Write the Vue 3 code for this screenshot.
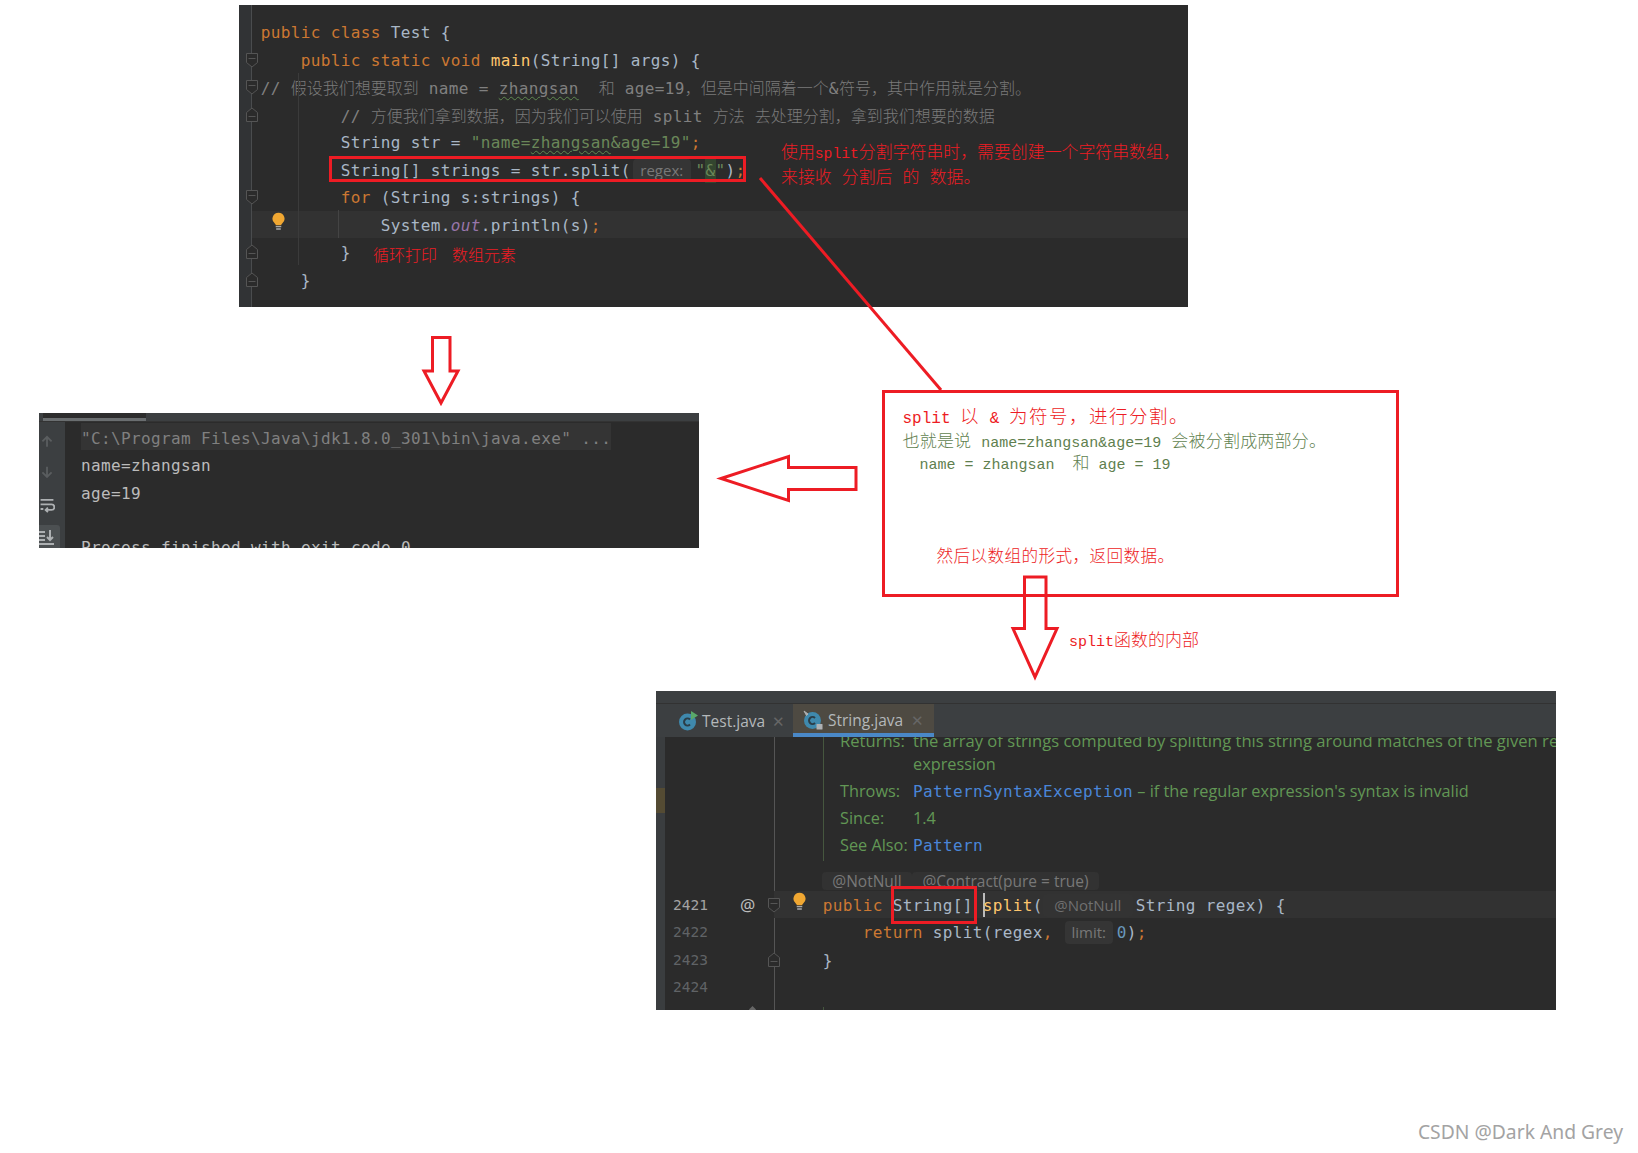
<script setup>
const topFolds = [
  { y: 60, up: false }, { y: 87, up: false }, { y: 115, up: true },
  { y: 197, up: false }, { y: 252, up: true }, { y: 280, up: true }
].map(f => ({ ...f, y: f.y - 5 }))
</script>

<template>
  <div class="canvas">
    <!-- top editor -->
    <section class="panel top-panel">
      <div class="strip"></div>
      <div class="guide g1"></div>
      <div class="guide g2"></div>
      <svg v-for="f in topFolds" :key="f.y" class="fold" :style="{ top: f.y - 8 + 'px' }" viewBox="0 0 12 16">
        <path v-if="!f.up" d="M.5 1.5h11v9L6 15 .5 10.500zM2.500 6.500h7" />
        <path v-else d="M.5 14.500h11v-9L6 1 .5 5.500zM2.500 9.500h7" />
      </svg>
      <svg class="bulb b-top" viewBox="0 0 14 20">
        <path class="bulb-fill" d="M7 .5a6.500 6.500 0 0 1 4 11.600c-.7.600-1 1-1 1.900H4c0-.9-.3-1.300-1-1.900A6.500 6.500 0 0 1 7 .5z" />
        <path class="bulb-base" d="M4 15.500h6M4.500 18h5" />
      </svg>
      <div class="ln"><b class="k">public class </b>Test {</div>
      <div class="ln i1"><b class="k">public static void </b><b class="m">main</b>(String[] args) {</div>
      <div class="ln c">// <i class="cn">假设我们想要取到</i> name = <u class="wavy">zhangsan</u>&#160;&#160;<i class="cn">和</i> age=19<i class="cn">，但是中间隔着一个</i>&amp;<i class="cn">符号，其中作用就是分割。</i></div>
      <div class="ln c i2">// <i class="cn">方便我们拿到数据，因为我们可以使用</i> split <i class="cn">方法</i> <i class="cn">去处理分割，拿到我们想要的数据</i></div>
      <div class="ln i2">String str = <b class="s">"name=<u class="wavy">zhangsan</u>&amp;age=19"</b><b class="k">;</b></div>
      <div class="ln i2">String[] strings = str.split(<span class="chip chip-regex">regex:</span><b class="s">"<span class="amp">&amp;</span>"</b>)<b class="k">;</b></div>
      <div class="ln i2"><b class="k">for </b>(String s:strings) {</div>
      <div class="ln caret-row">System.<em class="out">out</em>.println(s)<b class="k">;</b></div>
      <div class="ln i2">}<span class="ann loop">循环打印<span class="loop-gap"></span>数组元素</span></div>
      <div class="ln i1">}</div>
    </section>

    <!-- console -->
    <section class="panel console">
      <div class="con-top"><div class="con-tab"></div></div>
      <div class="con-body">
        <div class="con-tools">
          <svg class="con-ic" viewBox="0 0 16 16"><path class="dim" d="M8 14V3M3 8l5-5 5 5" /></svg>
          <svg class="con-ic" viewBox="0 0 16 16"><path class="dim" d="M8 2v11M3 8l5 5 5-5" /></svg>
          <svg class="con-ic wrap-ic" viewBox="0 0 16 16"><path class="lit" d="M1 2h14M1 7h12a2.500 2.500 0 0 1 0 6H7M9 10.500 6.500 13 9 15.500M1 12h3" /></svg>
          <div class="con-hover">
            <svg class="con-ic" viewBox="0 0 16 16"><path class="lit" d="M0 3h6M0 7h6M0 11h6M11 1v10M8 8l3 3 3-3M0 15h15" /></svg>
          </div>
        </div>
        <div class="con-text">
          <div class="con-ln cmd">"C:\Program Files\Java\jdk1.8.0_301\bin\java.exe" ...</div>
          <div class="con-ln">name=zhangsan</div>
          <div class="con-ln">age=19</div>
          <div class="con-ln">&#160;</div>
          <div class="con-ln">Process finished with exit code 0</div>
        </div>
      </div>
    </section>

    <!-- annotation box -->
    <div class="note">
      <div class="n1"><span class="n1-lat">split </span>以<span class="n1-lat"> &amp; </span>为符号，进行分割。</div>
      <div class="n2">也就是说<span class="n2-lat n2-pad">&#160;name=zhangsan&amp;age=19&#160;</span>会被分割成两部分。</div>
      <div class="n3"><span class="n2-lat">name = zhangsan&#160;&#160;</span>和<span class="n2-lat">&#160;age = 19</span></div>
      <div class="n4">然后以数组的形式，返回数据。</div>
    </div>

    <!-- bottom editor -->
    <section class="panel bottom">
      <div class="b-top-bar"></div>
      <div class="tabs">
        <div class="tab t1">
          <svg class="cls" viewBox="0 0 20 20">
            <circle cx="9.500" cy="11" r="8.500" class="cls-c" />
            <path class="cls-l" d="M12 8.500a3.500 3.500 0 1 0 0 5" />
            <path class="cls-play" d="M13 0l7 4.500-7 4.500z" />
          </svg>
          <span>Test.java</span><span class="x">✕</span>
        </div>
        <div class="tab t2">
          <svg class="cls" viewBox="0 0 20 20">
            <circle cx="9.500" cy="10.500" r="8.500" class="cls-c" />
            <path class="cls-l" d="M12 8a3.500 3.500 0 1 0 0 5" />
            <path class="cls-pin" d="M1 1l4 3-1.500 1.500z" />
            <rect class="cls-lock" x="13.500" y="14" width="6" height="5.500" rx=".5" />
          </svg>
          <span>String.java</span><span class="x">✕</span>
        </div>
      </div>
      <div class="editor">
        <div class="side-strip"><div class="side-mark"></div></div>
        <div class="ed-gutter-line"></div>
        <div class="doc">
          <div class="doc-row first"><span class="doc-l">Returns:</span><span>the array of strings computed by splitting this string around matches of the given regular</span></div>
          <div class="doc-row second"><span class="doc-l"></span><span>expression</span></div>
          <div class="doc-row"><span class="doc-l">Throws:</span><span><span class="ref">PatternSyntaxException</span> – if the regular expression's syntax is invalid</span></div>
          <div class="doc-row"><span class="doc-l">Since:</span><span>1.4</span></div>
          <div class="doc-row"><span class="doc-l">See Also:</span><span class="ref">Pattern</span></div>
        </div>
        <div class="annos"><span class="anno a1">@NotNull</span><span class="anno a2">@Contract(pure = true)</span></div>
        <div class="ed-row current">
          <span class="num on">2421</span>
          <span class="at">@</span>
          <svg class="fold ed-fold" viewBox="0 0 12 16"><path d="M.5 1.500h11v9L6 15 .5 10.500zM2.500 6.500h7" /></svg>
          <svg class="bulb b-ed" viewBox="0 0 14 20">
            <path class="bulb-fill" d="M7 .5a6.500 6.500 0 0 1 4 11.600c-.7.600-1 1-1 1.900H4c0-.9-.3-1.300-1-1.900A6.500 6.500 0 0 1 7 .5z" />
            <path class="bulb-base" d="M4 15.500h6M4.500 18h5" />
          </svg>
          <span class="code"><b class="k">public </b>String[] <span class="text-caret"></span><b class="m">split</b>(<span class="chip chip-nn">@NotNull</span>String regex) {</span>
        </div>
        <div class="ed-row">
          <span class="num">2422</span>
          <span class="code i1"><b class="k">return </b>split(regex<b class="k">,</b> <span class="chip chip-limit">limit:</span><b class="zero">0</b>)<b class="k">;</b></span>
        </div>
        <div class="ed-row">
          <span class="num">2423</span>
          <svg class="fold ed-fold" viewBox="0 0 12 16"><path d="M.5 14.500h11v-9L6 1 .5 5.500zM2.500 9.500h7" /></svg>
          <span class="code">}</span>
        </div>
        <div class="ed-row"><span class="num">2424</span></div>
        <div class="tail-dot"></div>
        <div class="tail-line"></div>
      </div>
    </section>

    <!-- red annotations over the pictures -->
    <svg class="marks" viewBox="0 0 1638 1153">
      <g class="red">
        <rect x="330.500" y="157.500" width="414" height="23" />
        <rect x="892.500" y="887.500" width="83" height="35" />
        <path d="M760 178 941 390" />
        <path d="M432.500 337.500H450V371H458L441 403 424 371H432.500z" />
        <path d="M721 478.500 788.500 456.500V467.500H856V489.500H788.500V500.500z" />
        <rect x="883.500" y="391.500" width="514" height="204" />
        <path d="M1024.500 577H1046V628.500H1057L1035 677 1013 628.500H1024.500z" />
      </g>
    </svg>

    <div class="ann top-ann">
      <div>使用<span class="lat">split</span>分割字符串时，需要创建一个字符串数组，</div>
      <div>来接收 分割后 的 数据。</div>
    </div>
    <div class="ann inner-ann"><span class="lat2">split</span>函数的内部</div>

    <div class="watermark">CSDN @Dark And Grey</div>
  </div>
</template>

<style>
html, body { margin: 0; background: #fff; }
</style>

<style scoped>
.canvas {
  position: relative;
  width: 1638px;
  height: 1153px;
  overflow: hidden;
  background: #fff;
  font-family: "DejaVu Sans Mono", "Noto Sans CJK SC", monospace;
}
.panel {
  position: absolute;
  background: #2b2b2b;
  overflow: hidden;
  color: #a9b7c6;
  font-size: 16px;
  letter-spacing: .37px;
  box-sizing: border-box;
}
b { font-weight: 400; }
.k { color: #cc7832; }
.m { color: #ffc66d; }
.s { color: #6a8759; }
.zero { color: #6897bb; }
.out { color: #9876aa; font-style: italic; }
.i1 { padding-left: 40px; }
.i2 { padding-left: 80px; }

.top-panel {
  left: 239px;
  top: 5px;
  width: 949px;
  height: 302px;
  padding: 13px 0 0 21.700px;
}
.strip {
  position: absolute;
  left: 0;
  top: 0;
  bottom: 0;
  width: 12px;
  background: #313335;
  border-right: 1px solid #4a4c4e;
}
.guide { position: absolute; width: 1px; background: #3b3b3b; }
.g1 { left: 59px; top: 68px; height: 192px; }
.g2 { left: 99px; top: 205px; height: 28px; z-index: 1; background: #444; }
.fold {
  position: absolute;
  left: 7px;
  width: 12px;
  height: 16px;
  fill: #2b2b2b;
  stroke: #555;
  stroke-width: 1;
  z-index: 2;
}
.bulb { position: absolute; width: 13px; height: 19px; z-index: 2; }
.bulb-fill { fill: #f0a732; }
.bulb-base { fill: none; stroke: #a9a9a9; stroke-width: 1.500; }
.b-top { left: 33px; top: 207px; }

.ln {
  height: 27.500px;
  line-height: 29px;
  white-space: pre;
}
.ln.c { color: #808080; line-height: 28px; }
.cn {
  font-family: "Noto Sans CJK SC", sans-serif;
  font-style: normal;
  font-weight: 300;
  letter-spacing: 0;
  color: #7a7a7a;
}
.wavy {
  text-decoration: underline wavy #5f8a50 1px;
  text-underline-offset: 2px;
}
.chip {
  display: inline-block;
  box-sizing: border-box;
  font-family: "Open Sans", sans-serif;
  font-size: 15px;
  letter-spacing: 0;
  color: #787878;
  background: #353535;
  border-radius: 4px;
  text-align: center;
  line-height: 22px;
  height: 23px;
}
.chip-regex { width: 58px; margin: 0 4.700px 0 2px; vertical-align: 0; }
.amp { background: #33452f; display: inline-block; height: 27.500px; }
.caret-row {
  margin-left: -21.700px;
  padding-left: 141.700px;
  background: #323232;
}
.ann {
  font-family: "Liberation Mono", "Noto Sans CJK SC", monospace;
  color: #ed1c24;
  font-weight: 300;
}
.loop {
  font-family: "Noto Sans CJK SC", sans-serif;
  font-size: 16px;
  letter-spacing: 0;
  margin-left: 22.300px;
  vertical-align: -3px;
  line-height: 20px;
}
.loop-gap { display: inline-block; width: 15px; }

.console {
  left: 39px;
  top: 413px;
  width: 660px;
  height: 135px;
}
.con-top { height: 9px; background: #3c3f41; border-bottom: 1px solid #333; box-sizing: border-box; }
.con-tab {
  margin-left: 4px;
  width: 103px;
  height: 8px;
  background: #2d2d2d;
  border-bottom: 3px solid #6a6e70;
  box-sizing: border-box;
}
.con-body { display: flex; height: 126px; }
.con-tools {
  width: 26px;
  flex: none;
  background: #3c3f41;
  display: flex;
  flex-direction: column;
  padding-top: 12px;
  box-sizing: border-box;
}
.con-ic { width: 16px; height: 16px; display: block; margin-bottom: 16px; fill: none; stroke-width: 2; }
.wrap-ic { margin-top: 3px; }
.dim { stroke: #5a5d5f; }
.lit { stroke: #adb0b2; }
.con-hover { width: 21px; height: 23px; background: #4c5052; margin-top: -4px; padding-top: 4px; box-sizing: border-box; border-radius: 0 3px 0 0; }
.con-text { padding: 1px 0 0 16px; flex: 1; }
.con-ln {
  height: 27.300px;
  line-height: 32px;
  white-space: pre;
  color: #bbb;
  width: max-content;
}
.cmd { color: #808080; background: #343434; }

.note {
  position: absolute;
  left: 883px;
  top: 391px;
  width: 515px;
  height: 205px;
  font-family: "Noto Sans CJK SC", sans-serif;
  font-weight: 300;
  white-space: pre;
}
.n1 { color: #ed1c24; font-size: 18.500px; padding: 10px 0 0 19.500px; height: 28px; line-height: 28px; letter-spacing: 1.500px; }
.n1-lat { font-family: "Liberation Mono", monospace; font-size: 16px; letter-spacing: 0; }
.n2 { color: #5f7f4f; font-size: 17px; padding-left: 19.500px; height: 22px; line-height: 22px; letter-spacing: .2px; }
.n2-lat { font-family: "Liberation Mono", monospace; font-size: 15px; letter-spacing: 0; }
.n2-pad { padding: 0 1px; }
.n3 { color: #5f7f4f; font-size: 17px; padding-left: 36.500px; height: 26px; line-height: 22px; }
.n4 { color: #ed1c24; font-size: 16.600px; padding: 64px 0 0 53.500px; line-height: 28px; letter-spacing: .4px; }

.bottom {
  left: 656px;
  top: 691px;
  width: 900px;
  height: 319px;
  display: flex;
  flex-direction: column;
}
.b-top-bar { height: 12px; background: #3c3f41; border-bottom: 1px solid #323232; flex: none; }
.tabs {
  flex: none;
  height: 33px;
  background: #3c3f41;
  display: flex;
  padding-left: 22px;
  box-sizing: border-box;
  font-family: "Open Sans", sans-serif;
  font-size: 15.500px;
  letter-spacing: 0;
  color: #b4b8ba;
  position: relative;
  z-index: 3;
}
.tab { display: flex; align-items: center; height: 33px; box-sizing: border-box; }
.t1 { width: 115px; gap: 4px; }
.t2 {
  width: 141px;
  padding: 2px 0 0 10px;
  gap: 5px;
  background: #4e4a42;
  border-bottom: 4px solid #4a88c7;
}
.cls { width: 20px; height: 20px; flex: none; }
.cls-c { fill: #3f89ad; stroke: none; }
.cls-l { fill: none; stroke: #2b3d47; stroke-width: 2; }
.cls-play { fill: #59a869; }
.cls-pin { fill: #afb1b3; stroke: #afb1b3; stroke-width: 1; }
.cls-lock { fill: #afb1b3; }
.x { color: #666; font-size: 15px; margin-left: 3px; }
.editor {
  position: relative;
  flex: 1;
  overflow: hidden;
}
.side-strip {
  position: absolute;
  left: 0;
  top: 0;
  bottom: 0;
  width: 9px;
  background: #3a3d3f;
}
.side-mark { margin-top: 51px; height: 25px; background: #544b33; }
.ed-gutter-line {
  position: absolute;
  left: 118px;
  top: 0;
  bottom: 0;
  width: 1px;
  background: #555;
}
.doc {
  margin: -10px 0 11px 167px;
  padding-left: 16px;
  border-left: 1px solid #46573f;
  height: 134px;
  box-sizing: border-box;
  font-family: "Open Sans", sans-serif;
  font-size: 16.300px;
  letter-spacing: 0;
  color: #629755;
}
.doc-row { display: flex; height: 27.300px; line-height: 27.300px; white-space: nowrap; }
.doc-row.first { height: 23px; line-height: 28px; font-size: 16.600px; }
.doc-row.second { height: 27.500px; line-height: 28px; }
.doc-l { width: 73px; flex: none; }
.ref { font-family: "DejaVu Sans Mono", monospace; font-size: 16px; letter-spacing: .37px; color: #4a86d8; }
.annos {
  display: flex;
  margin: 0 0 1px 166px;
  height: 18px;
  font-family: "Open Sans", sans-serif;
  font-size: 15.500px;
  letter-spacing: 0;
  line-height: 18px;
  color: #787878;
}
.anno { background: #323232; border-radius: 4px; text-align: center; box-sizing: border-box; }
.a1 { width: 90px; }
.a2 { width: 187px; }
.ed-row {
  position: relative;
  display: flex;
  height: 27.400px;
  line-height: 29.500px;
  white-space: pre;
}
.ed-row.current { background: linear-gradient(#323232, #323232) 118px 0 no-repeat; }
.num {
  flex: none;
  width: 166.700px;
  box-sizing: border-box;
  padding-left: 17px;
  font-size: 14.500px;
  letter-spacing: 0;
  color: #606366;
}
.num.on { color: #a4a3a3; }
.at { position: absolute; left: 84px; top: -1px; font-family: "Noto Sans", sans-serif; font-size: 17px; letter-spacing: 0; color: #bbb; }
.ed-fold { left: 112px; top: 6px; }
.b-ed { left: 137px; top: 1px; }
.text-caret {
  display: inline-block;
  width: 2px;
  height: 24px;
  margin-right: -2px;
  background: #bbb;
  vertical-align: -6px;
}
.chip-nn { width: 90px; margin: 0 3px 0 0; background: #333; color: #707070; }
.chip-limit { width: 48px; margin: 0 4px 0 2px; }
.tail-dot { position: absolute; left: 94px; top: 270px; width: 5px; height: 5px; background: #666; transform: rotate(45deg); }
.tail-line { position: absolute; left: 167px; top: 270px; width: 1px; height: 5px; background: #46573f; }

.marks {
  position: absolute;
  left: 0;
  top: 0;
  width: 1638px;
  height: 1153px;
  pointer-events: none;
}
.red { fill: none; stroke: #ed1c24; stroke-width: 3; }

.top-ann {
  position: absolute;
  left: 781px;
  top: 142px;
  font-size: 16.900px;
  line-height: 23.500px;
  white-space: pre;
}
.lat { font-size: 14.700px; letter-spacing: 0; }
.inner-ann {
  position: absolute;
  left: 1069px;
  top: 630px;
  font-size: 17px;
  line-height: 24px;
  white-space: pre;
}
.lat2 { font-size: 15px; letter-spacing: 0; }
.watermark {
  position: absolute;
  right: 15px;
  top: 1118px;
  font-family: "Noto Sans", sans-serif;
  font-size: 19.300px;
  line-height: 28px;
  color: #a3a3a3;
}
</style>
